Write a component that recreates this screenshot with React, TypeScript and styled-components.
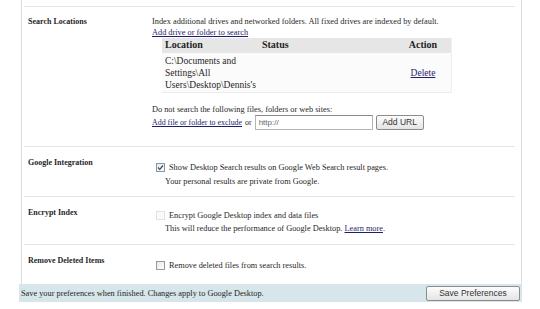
import styled, { createGlobalStyle } from "styled-components";

const GlobalStyle = createGlobalStyle`
  html, body {
    margin: 0;
    padding: 0;
    background: #fff;
  }
  body {
    font-family: "Liberation Serif", "Times New Roman", serif;
    color: #1f1f1f;
  }
`;

type BoxState = "checked" | "disabled" | "empty";

const locations = [
  {
    path: ["C:\\Documents and", "Settings\\All", "Users\\Desktop\\Dennis's"],
    status: "",
  },
];

export default function App() {
  return (
    <>
      <GlobalStyle />
      <Page>
        <Panel>
          <TopStub />

          <Section>
            <Label>Search Locations</Label>
            <Content>
              <Line>Index additional drives and networked folders. All fixed drives are indexed by default.</Line>
              <Line>
                <Link href="#">Add drive or folder to search</Link>
              </Line>
              <LocTable>
                <thead>
                  <tr>
                    <Th>Location</Th>
                    <Th>Status</Th>
                    <Th $center>Action</Th>
                  </tr>
                </thead>
                <tbody>
                  {locations.map((loc) => (
                    <tr key={loc.path.join("")}>
                      <Td>
                        {loc.path.map((p) => (
                          <div key={p}>{p}</div>
                        ))}
                      </Td>
                      <Td>{loc.status}</Td>
                      <Td $center>
                        <Link href="#">Delete</Link>
                      </Td>
                    </tr>
                  ))}
                </tbody>
              </LocTable>
              <Line $top={11}>Do not search the following files, folders or web sites:</Line>
              <ExcludeRow>
                <Link href="#">Add file or folder to exclude</Link>
                <span>or</span>
                <UrlInput defaultValue="http://" />
                <Button $w={48}>Add URL</Button>
              </ExcludeRow>
            </Content>
          </Section>

          <Section>
            <Label>Google Integration</Label>
            <Content $top={4}>
              <CheckRow>
                <CheckBox $state="checked" />
                <span>Show Desktop Search results on Google Web Search result pages.</span>
              </CheckRow>
              <Note>Your personal results are private from Google.</Note>
            </Content>
          </Section>

          <Section>
            <Label>Encrypt Index</Label>
            <Content $top={2}>
              <CheckRow>
                <CheckBox $state="disabled" />
                <span>Encrypt Google Desktop index and data files</span>
              </CheckRow>
              <Note $gap={2}>
                This will reduce the performance of Google Desktop. <Link href="#">Learn more</Link>.
              </Note>
            </Content>
          </Section>

          <Section $last>
            <Label>Remove Deleted Items</Label>
            <Content $top={4}>
              <CheckRow>
                <CheckBox $state="empty" />
                <span>Remove deleted files from search results.</span>
              </CheckRow>
            </Content>
          </Section>
        </Panel>

        <Footer>
          <span>Save your preferences when finished. Changes apply to Google Desktop.</span>
          <Button $w={94}>Save Preferences</Button>
        </Footer>
      </Page>
    </>
  );
}

function CheckBox({ $state }: { $state: BoxState }) {
  return (
    <Box $state={$state}>
      {$state === "checked" && (
        <svg width="7" height="7" viewBox="0 0 7 7">
          <path d="M1 3.5 L2.8 5.3 L6 1.5" fill="none" stroke="#3a4a5a" strokeWidth="1.2" />
        </svg>
      )}
    </Box>
  );
}

const Page = styled.div`
  width: 540px;
  height: 309px;
  overflow: hidden;
  font-size: 8.3px;
  line-height: 11px;
`;

const Panel = styled.div`
  margin-left: 21px;
  width: 499px;
  border-left: 1px solid #dcdcdc;
  border-right: 1px solid #dcdcdc;
`;

const TopStub = styled.div`
  height: 6px;
  margin: 0 6px 0 2px;
  border-bottom: 1px solid #e4e4e4;
`;

const Section = styled.div<{ $last?: boolean }>`
  display: grid;
  grid-template-columns: 124px 1fr;
  align-items: start;
  margin: 0 6px 0 2px;
  padding: 10px 0 0 4px;
  border-bottom: ${(p) => (p.$last ? "none" : "1px solid #e4e4e4")};
  &:nth-of-type(2) {
    height: 130px;
    padding-top: 9px;
  }
  &:nth-of-type(3) {
    height: 39px;
  }
  &:nth-of-type(4) {
    height: 37px;
  }
  &:nth-of-type(5) {
    height: 29px;
  }
`;

const Label = styled.div`
  font-weight: bold;
  font-size: 8px;
`;

const Content = styled.div<{ $top?: number }>`
  margin-top: ${(p) => p.$top ?? 0}px;
`;

const Line = styled.div<{ $top?: number }>`
  margin-top: ${(p) => p.$top ?? 0}px;
  white-space: nowrap;
`;

const Link = styled.a`
  color: #1e1e6a;
  text-decoration: underline;
`;

const LocTable = styled.table`
  margin: 0 0 0 10px;
  width: 290px;
  border-collapse: collapse;
  background: #fbfbfb;
  border-bottom: 1px solid #ececec;
  border-right: 1px solid #f0f0f0;
  font-size: 9.5px;
  line-height: 12px;
`;

const Th = styled.th<{ $center?: boolean }>`
  background: #e6e6e6;
  font-size: 10px;
  text-align: ${(p) => (p.$center ? "center" : "left")};
  padding: 1px 3px 2px;
  height: 12px;
  &:first-child {
    width: 90px;
  }
  &:last-child {
    width: 50px;
  }
`;

const Td = styled.td<{ $center?: boolean }>`
  text-align: ${(p) => (p.$center ? "center" : "left")};
  vertical-align: middle;
  padding: 2px 3px 1px;
`;

const ExcludeRow = styled.div`
  display: flex;
  align-items: center;
  gap: 3px;
  margin-top: -1px;
  height: 16px;
  font-size: 7.9px;
  white-space: nowrap;
`;

const UrlInput = styled.input`
  box-sizing: border-box;
  width: 118px;
  height: 15px;
  margin: 0;
  padding: 0 3px;
  border: 1px solid #b4b4b4;
  border-top-color: #8a8a8a;
  font-family: "Liberation Sans", Arial, sans-serif;
  font-size: 8px;
  color: #666;
  outline: none;
`;

const Button = styled.button<{ $w: number }>`
  box-sizing: border-box;
  width: ${(p) => p.$w}px;
  height: 15px;
  padding: 0;
  border: 1px solid #8c8c8c;
  border-radius: 2px;
  background: linear-gradient(#fdfdfd, #e4e4e4);
  font-family: "Liberation Sans", Arial, sans-serif;
  font-size: 8.5px;
  line-height: 13px;
  color: #333;
`;

const CheckRow = styled.div`
  display: flex;
  align-items: center;
  gap: 4px;
  margin-left: 4px;
  height: 12px;
  white-space: nowrap;
`;

const Box = styled.span<{ $state: BoxState }>`
  box-sizing: border-box;
  width: 9px;
  height: 9px;
  display: inline-flex;
  align-items: center;
  justify-content: center;
  border: 1px solid
    ${(p) => (p.$state === "disabled" ? "#e2e2e2" : p.$state === "checked" ? "#8796a6" : "#9a9a9a")};
  background: ${(p) => (p.$state === "disabled" ? "#fafafa" : "linear-gradient(135deg, #e8e8e8, #fdfdfd)")};
`;

const Note = styled.div<{ $gap?: number }>`
  margin: ${(p) => p.$gap ?? 3}px 0 0 13px;
  white-space: nowrap;
`;

const Footer = styled.div`
  display: flex;
  align-items: center;
  justify-content: space-between;
  margin-left: 19px;
  width: 503px;
  height: 18px;
  padding: 0 2px 0 2px;
  box-sizing: border-box;
  background: #d7e6ea;
  white-space: nowrap;
`;
